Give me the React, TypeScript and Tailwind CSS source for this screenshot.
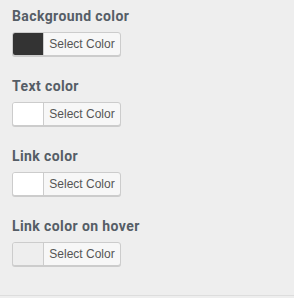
const FIELDS = [
  { label: 'Background color', color: '#333333' },
  { label: 'Text color', color: '#ffffff' },
  { label: 'Link color', color: '#ffffff' },
  { label: 'Link color on hover', color: '#eeeeee' },
];

function ColorPicker({ color }: { color: string }) {
  return (
    <button
      type="button"
      className="flex h-6 w-[109px] overflow-hidden rounded-[3px] border border-[#cccccc] bg-[#f7f7f7] shadow-[0_1px_0_#cccccc]"
    >
      <span className="h-full w-[31px] border-r border-[#cccccc]" style={{ backgroundColor: color }} />
      <span className="flex-1 text-center font-['Liberation_Sans',Arial,sans-serif] text-[12px] leading-[22px] text-[#555555]">
        Select Color
      </span>
    </button>
  );
}

export default function App() {
  return (
    <div className="h-[298px] w-[294px] bg-[#eeeeee] font-['Roboto','Liberation_Sans',sans-serif]">
      <div className="flex h-[296px] flex-col gap-[21px] border-b border-[#dddddd] px-3 pt-[7px]">
        {FIELDS.map(f => (
          <div key={f.label} className="flex flex-col gap-[7px]">
            <div className="text-[14px] font-bold leading-[18px] tracking-[0.4px] text-[#555d66]">{f.label}</div>
            <ColorPicker color={f.color} />
          </div>
        ))}
      </div>
    </div>
  );
}
